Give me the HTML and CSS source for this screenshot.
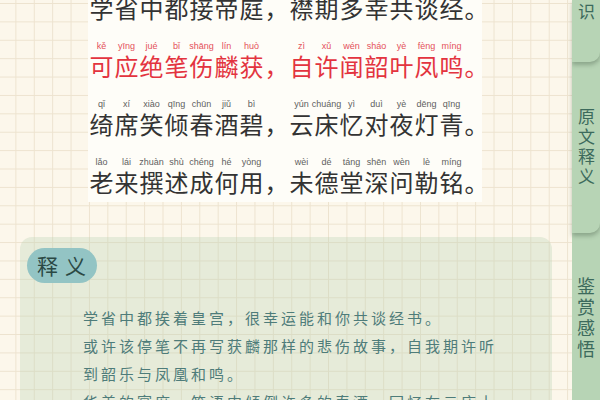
FILE: index.html
```html
<!DOCTYPE html>
<html lang="zh">
<head>
<meta charset="utf-8">
<link rel="stylesheet" href="styles.css">
</head>
<body>
<div class="page">
  <main class="content">
    <section class="poem">
      <div class="line">
        <span class="cell"><i>xué</i><b>学</b></span><span class="cell"><i>shěng</i><b>省</b></span><span class="cell"><i>zhōng</i><b>中</b></span><span class="cell"><i>dū</i><b>都</b></span><span class="cell"><i>jiē</i><b>接</b></span><span class="cell"><i>dì</i><b>帝</b></span><span class="cell"><i>tíng</i><b>庭</b></span><span class="cell"><i></i><b>，</b></span><span class="cell"><i>jīn</i><b>襟</b></span><span class="cell"><i>qī</i><b>期</b></span><span class="cell"><i>duō</i><b>多</b></span><span class="cell"><i>xìng</i><b>幸</b></span><span class="cell"><i>gòng</i><b>共</b></span><span class="cell"><i>tán</i><b>谈</b></span><span class="cell"><i>jīng</i><b>经</b></span><span class="cell"><i></i><b>。</b></span>
      </div>
      <div class="line red">
        <span class="cell"><i>kě</i><b>可</b></span><span class="cell"><i>yīng</i><b>应</b></span><span class="cell"><i>jué</i><b>绝</b></span><span class="cell"><i>bǐ</i><b>笔</b></span><span class="cell"><i>shāng</i><b>伤</b></span><span class="cell"><i>lín</i><b>麟</b></span><span class="cell"><i>huò</i><b>获</b></span><span class="cell"><i></i><b>，</b></span><span class="cell"><i>zì</i><b>自</b></span><span class="cell"><i>xǔ</i><b>许</b></span><span class="cell"><i>wén</i><b>闻</b></span><span class="cell"><i>sháo</i><b>韶</b></span><span class="cell"><i>yè</i><b>叶</b></span><span class="cell"><i>fèng</i><b>凤</b></span><span class="cell"><i>míng</i><b>鸣</b></span><span class="cell"><i></i><b>。</b></span>
      </div>
      <div class="line">
        <span class="cell"><i>qǐ</i><b>绮</b></span><span class="cell"><i>xí</i><b>席</b></span><span class="cell"><i>xiào</i><b>笑</b></span><span class="cell"><i>qīng</i><b>倾</b></span><span class="cell"><i>chūn</i><b>春</b></span><span class="cell"><i>jiǔ</i><b>酒</b></span><span class="cell"><i>bì</i><b>碧</b></span><span class="cell"><i></i><b>，</b></span><span class="cell"><i>yún</i><b>云</b></span><span class="cell"><i>chuáng</i><b>床</b></span><span class="cell"><i>yì</i><b>忆</b></span><span class="cell"><i>duì</i><b>对</b></span><span class="cell"><i>yè</i><b>夜</b></span><span class="cell"><i>dēng</i><b>灯</b></span><span class="cell"><i>qīng</i><b>青</b></span><span class="cell"><i></i><b>。</b></span>
      </div>
      <div class="line">
        <span class="cell"><i>lǎo</i><b>老</b></span><span class="cell"><i>lái</i><b>来</b></span><span class="cell"><i>zhuàn</i><b>撰</b></span><span class="cell"><i>shù</i><b>述</b></span><span class="cell"><i>chéng</i><b>成</b></span><span class="cell"><i>hé</i><b>何</b></span><span class="cell"><i>yòng</i><b>用</b></span><span class="cell"><i></i><b>，</b></span><span class="cell"><i>wèi</i><b>未</b></span><span class="cell"><i>dé</i><b>德</b></span><span class="cell"><i>táng</i><b>堂</b></span><span class="cell"><i>shēn</i><b>深</b></span><span class="cell"><i>wèn</i><b>问</b></span><span class="cell"><i>lè</i><b>勒</b></span><span class="cell"><i>míng</i><b>铭</b></span><span class="cell"><i></i><b>。</b></span>
      </div>
    </section>

    <section class="explain">
      <h2 class="label">释义</h2>
      <div class="text">
        <p>学省中都挨着皇宫，很幸运能和你共谈经书。</p>
        <p>或许该停笔不再写获麟那样的悲伤故事，自我期许听到韶乐与凤凰和鸣。</p>
        <p>华美的宴席，笑语中倾倒许多的春酒，回忆在云床上对着青青的夜灯。</p>
      </div>
    </section>
  </main>

  <nav class="tabs">
    <div class="tab tab-first"><span>知识</span></div>
    <div class="tab tab-mid"><span>原文释义</span></div>
    <div class="tab tab-last"><span>鉴赏感悟</span></div>
  </nav>
</div>
</body>
</html>
```
FILE: styles.css
```css
html, body {
  margin: 0;
  padding: 0;
}
body {
  width: 600px;
  height: 400px;
  overflow: hidden;
  font-family: "Noto Sans CJK SC", "Noto Sans", sans-serif;
  background-color: #fcf7eb;
  background-image:
    linear-gradient(#ede3cf 1px, transparent 1px),
    linear-gradient(90deg, #ede3cf 1px, transparent 1px);
  background-size: 18.4px 18.4px;
  background-position: -3px 3px;
}
.page {
  display: flex;
  width: 600px;
  height: 400px;
  overflow: hidden;
}
.content {
  width: 572px;
  display: flex;
  flex-direction: column;
  overflow: hidden;
}
.poem {
  margin: -30px 0 0 88px;
  width: 394px;
  padding: 12px 0 6px 1px;
  background: #fefdf8;
  display: flex;
  flex-direction: column;
  gap: 18px;
  box-sizing: border-box;
  flex: none;
}
.line {
  display: flex;
  color: #333;
}
.cell {
  width: 25px;
  flex: none;
  display: flex;
  flex-direction: column;
  align-items: center;
}
.cell i {
  font-style: normal;
  font-family: "Liberation Sans", "Noto Sans", sans-serif;
  font-size: 9px;
  line-height: 12px;
  height: 12px;
  color: #5f5f5f;
  white-space: nowrap;
}
.cell b {
  font-weight: 400;
  font-size: 24px;
  line-height: 28px;
  height: 28px;
}
.line.red {
  color: #e3343f;
}
.line.red .cell i {
  color: #e4505a;
}

.explain {
  margin: 35px 0 0 20px;
  width: 532px;
  padding: 11px 0 0 7px;
  box-sizing: border-box;
  flex: 1;
  min-height: 0;
  overflow: hidden;
  background: rgba(188, 212, 182, 0.34);
  border-radius: 12px 12px 0 0;
}
.label {
  margin: 0;
  width: 70px;
  height: 35px;
  box-sizing: border-box;
  padding-left: 10px;
  border-radius: 18px;
  background: #93c4c4;
  color: #2b4944;
  font-size: 21px;
  font-weight: 400;
  line-height: 35px;
  letter-spacing: 7px;
}
.text {
  margin: 21px 0 0 56px;
  width: 420px;
  color: #4e7c7a;
  font-size: 15px;
  line-height: 28px;
  letter-spacing: 3px;
}
.text p {
  margin: 0;
}

.tabs {
  width: 28px;
  flex: none;
  background: #b7d4b5;
  display: flex;
  flex-direction: column;
}
.tab {
  flex: none;
  background: #b7d4b5;
  border-radius: 0 0 10px 0;
  box-shadow: 0 3px 4px rgba(60, 80, 60, 0.35);
  color: #3c6a5c;
  display: flex;
  justify-content: center;
  align-items: center;
  position: relative;
}
.tab span {
  writing-mode: vertical-rl;
  text-orientation: upright;
  font-size: 17px;
  line-height: 20px;
  letter-spacing: 3px;
}
.tab-first {
  height: 62px;
  align-items: flex-start;
  z-index: 3;
}
.tab-first span {
  margin-top: -17px;
}
.tab-mid {
  height: 171px;
  z-index: 2;
}
.tab-last {
  margin-top: 4px;
  height: 163px;
  border-radius: 0;
  box-shadow: none;
}
.tab-last span {
  font-size: 18px;
  letter-spacing: 3px;
}
```
